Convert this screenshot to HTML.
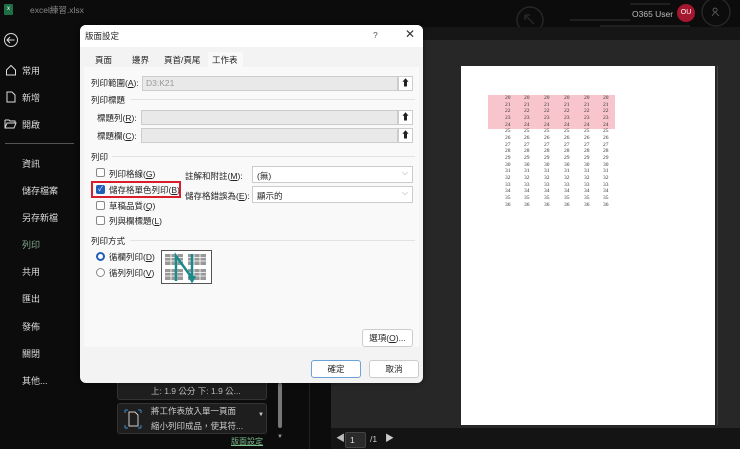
<!DOCTYPE html>
<html><head><meta charset="utf-8">
<style>
*{margin:0;padding:0;box-sizing:border-box}
body{width:740px;height:449px;overflow:hidden;background:#0c0c0c;font-family:"Liberation Sans","Noto Sans CJK TC",sans-serif;position:relative;color:#222}
.a{position:absolute;white-space:nowrap}
.nav{font-size:9px;color:#ddd}
.dlg{position:absolute;left:80px;top:25px;width:343px;height:358px;background:#f3f3f3;border-radius:6px;overflow:hidden;box-shadow:0 0 6px rgba(0,0,0,.5)}
.d{font-size:8.5px;color:#222}
.in{position:absolute;background:#e9e9e9;border:1px solid #ccc;height:15px}
.ib{position:absolute;width:15px;height:15px;background:#fff;border:1px solid #ccc;font-size:9px;text-align:center;line-height:13px;font-weight:bold}
.sel{position:absolute;background:#fff;border:1px solid #ccc;height:17px;font-size:8.5px;padding:3px 4px}
.sel:after{content:"⌵";position:absolute;right:4px;top:1px;color:#999;font-size:8px}
.cb{position:absolute;width:9px;height:9px;border:1px solid #888;border-radius:2px;background:#fff}
.btn{position:absolute;background:#fff;border:1px solid #ccc;border-radius:3px;font-size:8.5px;text-align:center;line-height:17px;height:18px}
.ln{position:absolute;height:1px;background:#e2e2e2}
.num{position:absolute;font-size:5.5px;font-family:"Liberation Serif",serif;color:#333;line-height:6.67px}
</style></head><body>
<div class="a" style="left:4px;top:4px;width:9px;height:11px;background:#1d7044;border-radius:1px;color:#fff;font-size:6px;text-align:center;line-height:11px">x</div>
<div class="a" style="left:30px;top:4px;font-size:8.5px;color:#888">excel練習.xlsx</div>
<svg class="a" style="left:500px;top:0" width="240" height="28" viewBox="0 0 240 28"><g stroke="#262626" stroke-width="1.5" fill="none"><circle cx="30" cy="20" r="13"/><path d="M25 15l9 9M25 15h5M25 15v5"/><path d="M70 20h60M100 26h90M130 4h40"/><circle cx="216" cy="12" r="14"/></g><path d="M212 16l3-4 4 4M215 8a2 2 0 1 0 .1 0" stroke="#555" fill="none"/></svg>
<div class="a" style="left:632px;top:9px;font-size:8.5px;color:#bbb">O365 User</div>
<div class="a" style="left:677px;top:4px;width:18px;height:18px;border-radius:50%;background:#a4172f;color:#fff;font-size:7px;text-align:center;line-height:18px">OU</div>
<svg class="a" style="left:3px;top:32px" width="16" height="16"><circle cx="8" cy="8" r="6.5" stroke="#ddd" fill="none"/><path d="M11.5 8h-7M7 5l-3 3 3 3" stroke="#ddd" fill="none"/></svg>
<svg class="a" style="left:5px;top:64px" width="12" height="12"><path d="M1.5 6l4.5-4.5 4.5 4.5v5h-9z" stroke="#ddd" fill="none"/></svg>
<div class="a nav" style="left:22px;top:64px">常用</div>
<svg class="a" style="left:6px;top:91px" width="10" height="12"><path d="M1 1h5l3 3v7h-8z" stroke="#ddd" fill="none"/></svg>
<div class="a nav" style="left:22px;top:91px">新增</div>
<svg class="a" style="left:4px;top:119px" width="14" height="10"><path d="M1 1h4l1 1h5v2M1 1v8h9l2-5h-9l-2 5" stroke="#ddd" fill="none"/></svg>
<div class="a nav" style="left:22px;top:118px">開啟</div>
<div class="a" style="left:5px;top:143px;width:69px;height:1px;background:#555"></div>
<div class="a nav" style="left:22px;top:157px">資訊</div>
<div class="a nav" style="left:22px;top:184px">儲存檔案</div>
<div class="a nav" style="left:22px;top:211px">另存新檔</div>
<div class="a nav" style="left:22px;top:238px;color:#7fa88f">列印</div>
<div class="a nav" style="left:22px;top:265px">共用</div>
<div class="a nav" style="left:22px;top:292px">匯出</div>
<div class="a nav" style="left:22px;top:320px">發佈</div>
<div class="a nav" style="left:22px;top:347px">關閉</div>
<div class="a nav" style="left:22px;top:374px">其他...</div>
<div class="a" style="left:80px;top:27px;width:660px;height:13px;background:#161616"></div>
<div class="a" style="left:117px;top:375px;width:150px;height:25px;background:#1e1e1e;border:1px solid #333;border-radius:3px"></div>
<div class="a" style="left:151px;top:385px;font-size:8.5px;color:#bbb">上: 1.9 公分 下: 1.9 公...</div>
<div class="a" style="left:117px;top:403px;width:150px;height:31px;background:#1e1e1e;border:1px solid #333;border-radius:3px"></div>
<svg class="a" style="left:123px;top:408px" width="20" height="22"><path d="M6 4h6l3 3v11h-9z" stroke="#ccc" fill="none"/><path d="M2 2h3M2 2v3M18 2h-3M18 2v3M2 20h3M2 20v-3M18 20h-3M18 20v-3" stroke="#3a8fd0"/></svg>
<div class="a" style="left:151px;top:405px;font-size:8.5px;color:#ccc">將工作表放入單一頁面</div>
<div class="a" style="left:151px;top:420px;font-size:8.5px;color:#ccc">縮小列印成品，使其符...</div>
<div class="a" style="left:258px;top:412px;font-size:6px;color:#ccc">▼</div>
<div class="a" style="left:278px;top:383px;width:4px;height:45px;background:#777;border-radius:2px"></div>
<div class="a" style="left:277px;top:434px;font-size:6px;color:#999">▼</div>
<div class="a" style="left:231px;top:436px;font-size:8px;color:#7fbf8f;text-decoration:underline">版面設定</div>
<div class="a" style="left:309px;top:40px;width:1px;height:409px;background:#222"></div>
<div class="a" style="left:331px;top:40px;width:409px;height:388px;background:#272727"></div>
<div class="a" style="left:461px;top:66px;width:254px;height:359px;background:#fff"></div>
<div class="a" style="left:717px;top:66px;width:1px;height:359px;background:#444"></div>
<div class="a" style="left:488px;top:95px;width:127px;height:34px;background:#f9c5cc"></div>
<div class="a" style="left:331px;top:428px;width:409px;height:21px;background:#141414"></div>
<div class="a" style="left:336px;top:431px;font-size:9px;color:#bbb">◀</div>
<div class="a" style="left:345px;top:432px;width:21px;height:16px;background:#2a2a2a;border:1px solid #444;border-radius:2px;color:#ddd;font-size:8.5px;padding:2px 4px">1</div>
<div class="a" style="left:370px;top:434px;font-size:8.5px;color:#ccc">/1</div>
<div class="a" style="left:385px;top:431px;font-size:9px;color:#ccc">▶</div>
<div id="nums"></div>
<div class="dlg">
 <div class="a" style="left:0;top:0;width:343px;height:22px;background:#fff"></div>
 <div class="a d" style="left:5px;top:5px">版面設定</div>
 <div class="a d" style="left:293px;top:5px;color:#555">?</div>
 <div class="a" style="left:325px;top:2px;font-size:12px;color:#333">✕</div>
 <div class="a" style="left:128px;top:27px;width:35px;height:16px;background:#f9f9f9"></div>
 <div class="a d" style="left:15px;top:29px">頁面</div>
 <div class="a d" style="left:52px;top:29px">邊界</div>
 <div class="a d" style="left:84px;top:29px">頁首/頁尾</div>
 <div class="a d" style="left:132px;top:29px">工作表</div>
 <div class="a" style="left:4px;top:42px;width:335px;height:280px;background:#f9f9f9"></div>
 <div class="a d" style="left:11px;top:52px">列印範圍(<u>A</u>):</div>
 <div class="in" style="left:62px;top:51px;width:256px;color:#999;font-size:8.5px;padding:1px 3px">D3:K21</div>
 <div class="ib" style="left:318px;top:51px">⬆</div>
 <div class="a d" style="left:11px;top:69px">列印標題</div><div class="ln" style="left:50px;top:74px;width:285px"></div>
 <div class="a d" style="left:17px;top:87px">標題列(<u>R</u>):</div>
 <div class="in" style="left:61px;top:85px;width:257px"></div><div class="ib" style="left:318px;top:85px">⬆</div>
 <div class="a d" style="left:17px;top:105px">標題欄(<u>C</u>):</div>
 <div class="in" style="left:61px;top:103px;width:257px"></div><div class="ib" style="left:318px;top:103px">⬆</div>
 <div class="a d" style="left:11px;top:126px">列印</div><div class="ln" style="left:32px;top:131px;width:303px"></div>
 <div class="cb" style="left:16px;top:143px"></div><div class="a d" style="left:29px;top:143px">列印格線(<u>G</u>)</div>
 <div class="a" style="left:11px;top:156px;width:90px;height:17px;border:2px solid #d81e2a"></div>
 <div class="cb" style="left:16px;top:160px;background:#1f5fb8;border-color:#1f5fb8;color:#fff;font-size:7px;line-height:7px;text-align:center">✓</div>
 <div class="a d" style="left:29px;top:159px">儲存格單色列印(<u>B</u>)</div>
 <div class="cb" style="left:16px;top:176px"></div><div class="a d" style="left:29px;top:175px">草稿品質(<u>Q</u>)</div>
 <div class="cb" style="left:16px;top:191px"></div><div class="a d" style="left:29px;top:190px">列與欄標題(<u>L</u>)</div>
 <div class="a d" style="left:105px;top:145px">註解和附註(<u>M</u>):</div>
 <div class="sel" style="left:172px;top:141px;width:161px">(無)</div>
 <div class="a d" style="left:105px;top:165px">儲存格錯誤為(<u>E</u>):</div>
 <div class="sel" style="left:172px;top:161px;width:161px">顯示的</div>
 <div class="a d" style="left:11px;top:210px">列印方式</div><div class="ln" style="left:50px;top:215px;width:285px"></div>
 <div class="a" style="left:16px;top:227px;width:9px;height:9px;border-radius:50%;border:2.5px solid #1f5fb8;background:#fff"></div>
 <div class="a d" style="left:29px;top:226px">循欄列印(<u>D</u>)</div>
 <div class="a" style="left:16px;top:243px;width:9px;height:9px;border-radius:50%;border:1px solid #888;background:#fff"></div>
 <div class="a d" style="left:29px;top:242px">循列列印(<u>V</u>)</div>
 <svg class="a" style="left:81px;top:225px" width="51" height="34"><rect x=".5" y=".5" width="50" height="33" fill="#fff" stroke="#555"/><g fill="#999"><rect x="4" y="4" width="18" height="11"/><rect x="27" y="4" width="18" height="11"/><rect x="4" y="19" width="18" height="11"/><rect x="27" y="19" width="18" height="11"/></g><g stroke="#fff" stroke-width=".8"><path d="M4 7.5h18M4 11h18M27 7.5h18M27 11h18M4 22.5h18M4 26h18M27 22.5h18M27 26h18M10 4v26M16 4v26M33 4v26M39 4v26"/></g><path d="M15 31V6l16 22V4M28 26l3 5 3-5" stroke="#1a8a8a" stroke-width="2.5" fill="none"/></svg>
 <div class="btn" style="left:282px;top:304px;width:51px">選項(<u>O</u>)...</div>
 <div class="btn" style="left:231px;top:335px;width:50px;border-color:#6ba2d8">確定</div>
 <div class="btn" style="left:289px;top:335px;width:50px">取消</div>
</div>
<script>
var h='',xs=[508,527,547,567,587,606];
for(var c=0;c<6;c++){var s='';for(var r=20;r<=36;r++)s+=r+'<br>';h+='<div class="num" style="left:'+(xs[c]-3)+'px;top:95px;color:#333">'+s+'</div>';}
document.getElementById('nums').innerHTML=h;
</script>
</body></html>
